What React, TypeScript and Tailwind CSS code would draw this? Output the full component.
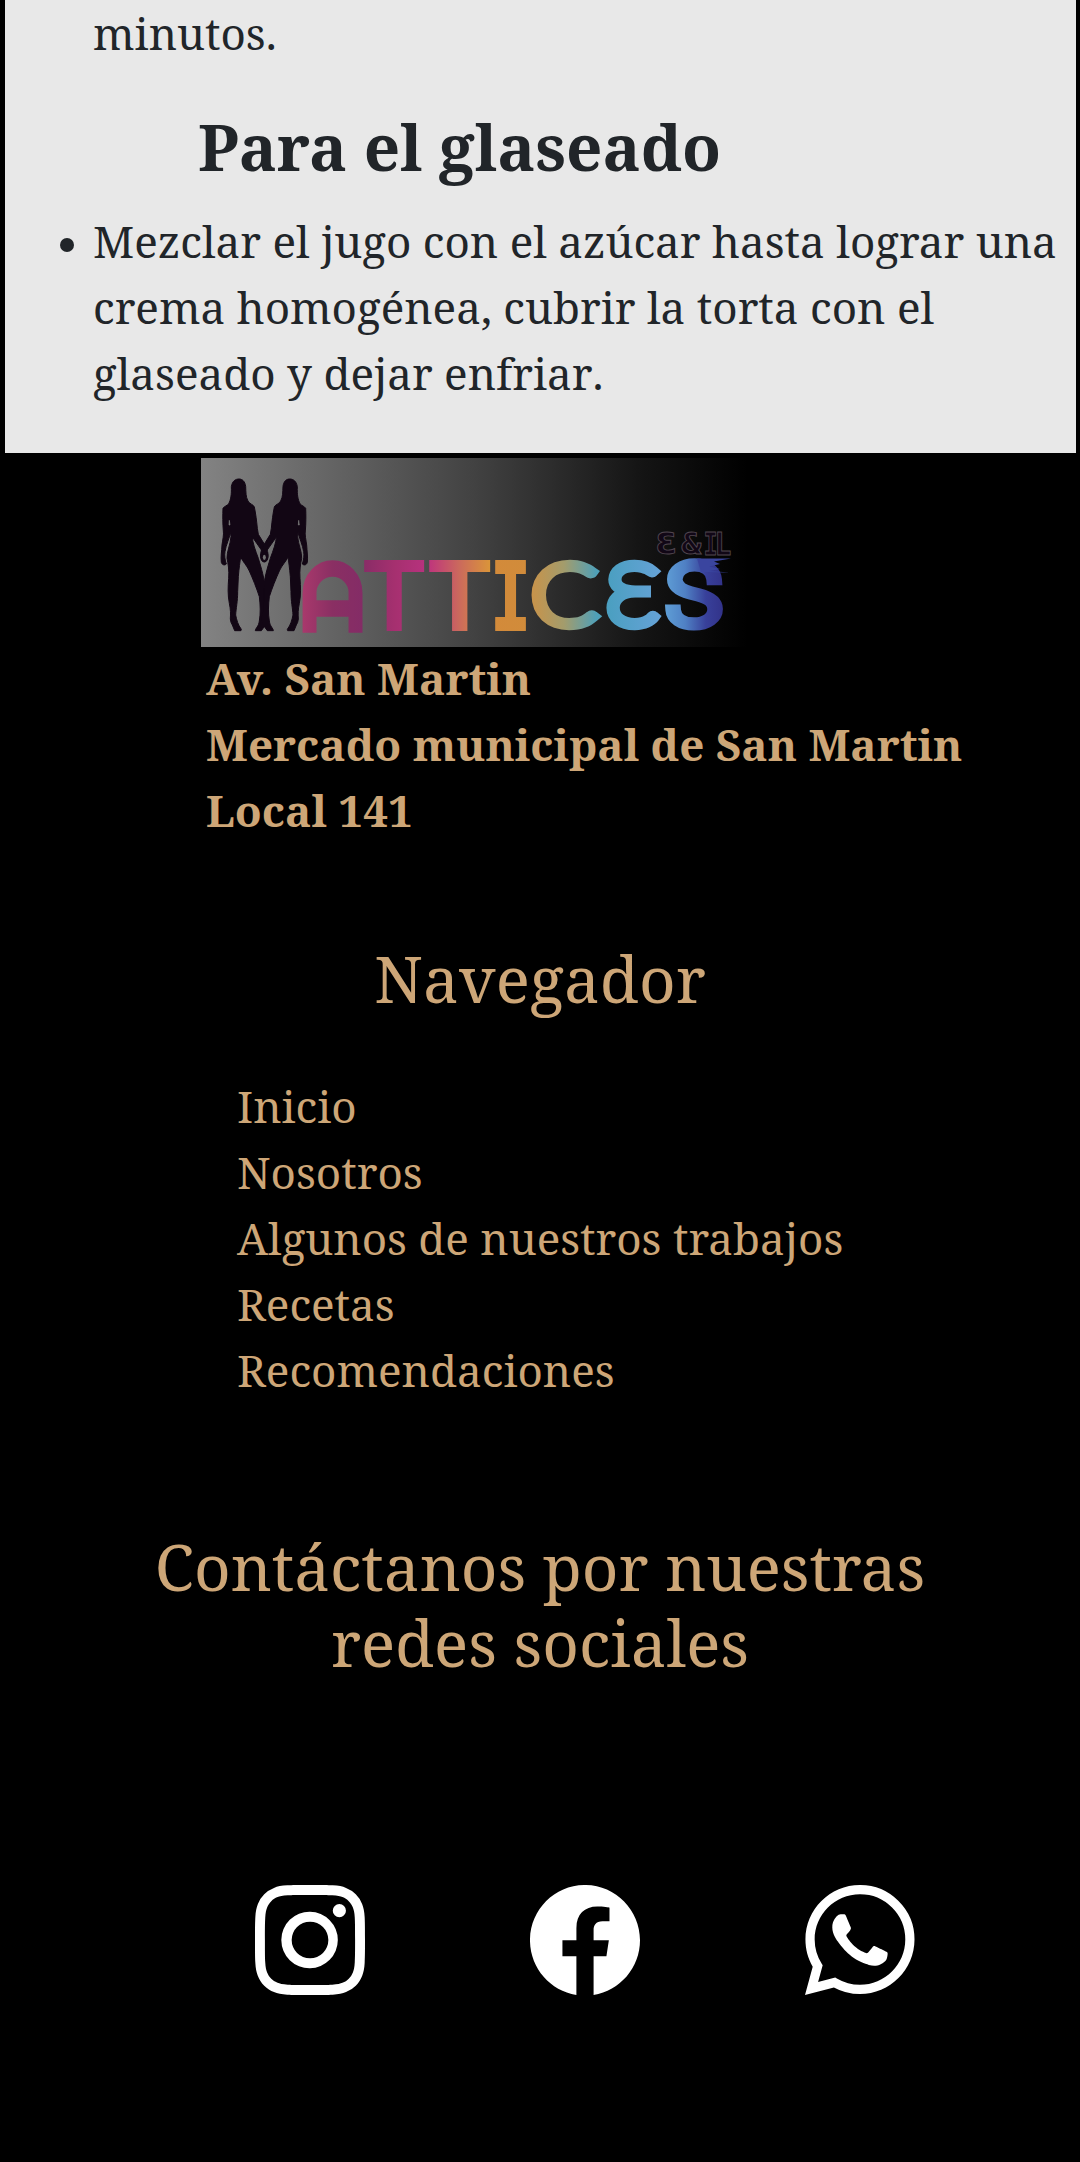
import { BsFacebook, BsInstagram, BsWhatsapp } from "react-icons/bs";

type Box = [number, number, number, number];

interface LetterProps {
  ch: string;
  font: string;
  weight?: number;
  /** Ink extents at 100px: left, right, ascent, descent. */
  ink: Box;
  /** Target box: left, top, right, bottom. */
  box: Box;
  fill: string;
  stroke?: string;
  /** Outline width in glyph units (100px em). */
  strokeWidth?: number;
}

function Letter({ ch, font, weight = 700, ink, box, fill, stroke, strokeWidth = 0 }: LetterProps) {
  const h = strokeWidth / 2;
  const sx = (box[2] - box[0]) / (ink[1] - ink[0] + strokeWidth);
  const sy = (box[3] - box[1]) / (ink[2] + ink[3] + strokeWidth);
  const tx = box[0] - (ink[0] - h) * sx;
  const ty = box[3] - (ink[3] + h) * sy;
  return (
    <text
      transform={`translate(${tx} ${ty}) scale(${sx} ${sy})`}
      fontFamily={font}
      fontWeight={weight}
      fontSize={100}
      fill={fill}
      stroke={stroke ?? fill}
      strokeWidth={strokeWidth}
    >
      {ch}
    </text>
  );
}

const DEJAVU = '"DejaVu Sans", sans-serif';
const MONO = '"DejaVu Sans Mono", monospace';
const LATO = "Lato, sans-serif";
const INTER = "Inter, sans-serif";

const gradients: { id: string; stops: [number, string][] }[] = [
  { id: "ga", stops: [[0, "#a8396c"], [0.5, "#8a2f63"], [1, "#842c66"]] },
  { id: "gt1", stops: [[0, "#862c66"], [0.5, "#a5306f"], [1, "#b9327f"]] },
  { id: "gt2", stops: [[0, "#bd2f80"], [0.5, "#cb6a5c"], [1, "#dc9a35"]] },
  { id: "gi", stops: [[0, "#d38a3a"], [1, "#d18c3b"]] },
  { id: "gc", stops: [[0, "#c8934a"], [0.5, "#a39c6c"], [1, "#4fa0b8"]] },
  { id: "ge", stops: [[0, "#4a9fc0"], [1, "#64a2d6"]] },
  { id: "gs", stops: [[0, "#5f9fd6"], [0.35, "#4f80c4"], [0.7, "#38409a"], [1, "#323289"]] },
];

const FIGURE =
  "M147 102C158 102 165 110 167 124C168 142 167 155 174 168C178 177 190 178 193 186C197 205 200 228 202 250L205 268L226 302C234 318 237 333 231 344C226 354 215 352 213 341C211 332 213 326 217 319L187 276C188 295 196 315 205 340C214 370 224 400 224 430L224 470C224 495 228 508 232 520L228 538L214 557L196 557C196 550 206 545 208 528C212 505 211 480 208 455C200 430 188 400 178 378C170 360 158 350 152 336C150 350 147 370 145 395C144 410 144 425 143 440C143 470 138 490 137 510C140 525 144 540 154 553L153 557L134 557L127 540L123 532L121 522C122 505 122 495 118 475C113 450 114 425 116 400C118 375 114 355 111 340C110 320 121 300 123 275L122 262C118 280 108 300 105 320C103 332 105 345 109 357C104 362 96 360 94 352C92 335 95 320 96 300C98 285 102 268 100 258C98 235 98 210 99 190C102 184 112 182 116 176C122 165 125 150 124 125C127 108 136 102 147 102Z";

function Logo() {
  return (
    <svg className="block h-[189px] w-[546px]" viewBox="0 0 546 189" role="img" aria-label="Mattices E & IL">
      <defs>
        <linearGradient id="bg">
          <stop offset="0" stopColor="#838383" />
          <stop offset="0.5" stopColor="#424242" />
          <stop offset="0.8" stopColor="#151515" />
          <stop offset="1" stopColor="#000000" />
        </linearGradient>
        {gradients.map((g) => (
          <linearGradient key={g.id} id={g.id}>
            {g.stops.map(([o, c]) => (
              <stop key={o} offset={o} stopColor={c} />
            ))}
          </linearGradient>
        ))}
      </defs>
      <rect width="546" height="189" fill="url(#bg)" />

      <g transform="translate(-11 -13) scale(0.33333)">
        <g fill="#120614" stroke="#120614" strokeWidth="3">
          <path d={FIGURE} />
          <path d={FIGURE} transform="translate(446 0) scale(-1 1)" />
        </g>
        <ellipse cx="223" cy="337" rx="4.5" ry="8" fill="#737373" />
        <path
          d="M118 226L120 240L117 240ZM326 226L328 240L325 240Z"
          fill="#7a7a7a"
          stroke="#7a7a7a"
          strokeWidth="2"
        />
      </g>

      <Letter ch="ᗩ" font={DEJAVU} ink={[5.5, 77.5, 73.5, 0]} box={[103, 102, 160, 173]} fill="url(#ga)" strokeWidth={8} />
      <Letter ch="T" font={INTER} ink={[3.5, 63, 72.5, 0]} box={[163, 102, 223, 173]} fill="url(#gt1)" />
      <Letter ch="T" font={INTER} ink={[3.5, 63, 72.5, 0]} box={[228, 102, 289, 173]} fill="url(#gt2)" />
      <Letter ch="I" font={MONO} ink={[8, 52, 73, 0]} box={[294, 102, 325, 173]} fill="url(#gi)" strokeWidth={2} />
      <Letter ch="C" font={LATO} weight={100} ink={[6.3, 65, 72, 1]} box={[330, 102, 399, 173]} fill="url(#gc)" strokeWidth={14} />
      <Letter ch="Ɛ" font={LATO} weight={100} ink={[6.3, 54, 72, 1]} box={[405, 102, 459, 173]} fill="url(#ge)" strokeWidth={14} />
      <Letter ch="S" font={INTER} weight={100} ink={[6.3, 54.7, 74.5, 1.2]} box={[463, 100, 523, 173]} fill="url(#gs)" strokeWidth={14} />
      <path d="M496 100.500L530 100.500L513 103.500L519 106L508 108.500L519 111L508 113L529 114.500L500 114Z" fill="#3a459f" />

      <Letter ch="Ɛ" font={DEJAVU} ink={[6, 61, 74.5, 1.5]} box={[456, 73, 474, 97]} fill="#110716" stroke="#51464f" strokeWidth={3} />
      <Letter ch="&" font={MONO} ink={[1, 61, 75, 1]} box={[480, 73, 501, 97]} fill="#110716" stroke="#51464f" strokeWidth={3} />
      <Letter ch="I" font={MONO} ink={[8, 52, 73, 0]} box={[504, 73, 515, 97]} fill="#110716" stroke="#51464f" strokeWidth={3} />
      <Letter ch="L" font={MONO} ink={[10, 57, 73, 0]} box={[516, 73, 530, 97]} fill="#110716" stroke="#51464f" strokeWidth={3} />
    </svg>
  );
}

const links = ["Inicio", "Nosotros", "Algunos de nuestros trabajos", "Recetas", "Recomendaciones"];

export default function App() {
  return (
    <div className="flex h-[2162px] w-[1080px] flex-col overflow-hidden bg-black font-['Noto_Serif',serif] text-[44px] leading-[66px] text-[#cda677]">
      <main className="mr-[4px] ml-[5px] h-[453px] shrink-0 bg-[#e8e8e8] text-[#212529]">
        <p className="pl-[88px]">minutos.</p>
        <h3 className="mt-[43px] pl-[193px] text-[63.7px] leading-[76px] font-bold">Para el glaseado</h3>
        <ul className="mt-[23px] pl-[88px]">
          <li className="relative">
            <span className="absolute top-[30px] -left-[33px] size-[14px] rounded-full bg-[#212529]" />
            Mezclar el jugo con el azúcar hasta lograr una crema homogénea, cubrir la torta con el glaseado y dejar{" "}
            <span className="[font-kerning:none]">enfriar.</span>
          </li>
        </ul>
      </main>

      <footer className="flex flex-col pt-[5px]">
        <div className="pl-[201px]">
          <Logo />
        </div>
        <address className="-mt-[2px] pl-[206px] font-bold whitespace-nowrap not-italic">
          <p>Av. San Martin</p>
          <p>Mercado municipal de San Martin</p>
          <p>Local 141</p>
        </address>

        <h3 className="mt-[98px] text-center text-[63.7px] leading-[76px]">Navegador</h3>
        <nav className="mt-[56px] flex flex-col pl-[237px]">
          {links.map((l) => (
            <a key={l} href="#">
              {l}
            </a>
          ))}
        </nav>

        <h3 className="mt-[126px] text-center text-[63.7px] leading-[76px]">
          Contáctanos por nuestras
          <br />
          redes sociales
        </h3>
        <div className="mt-[204px] flex gap-[165px] pl-[255px] text-[110px] text-white">
          <BsInstagram />
          <BsFacebook />
          <BsWhatsapp />
        </div>
      </footer>
    </div>
  );
}
